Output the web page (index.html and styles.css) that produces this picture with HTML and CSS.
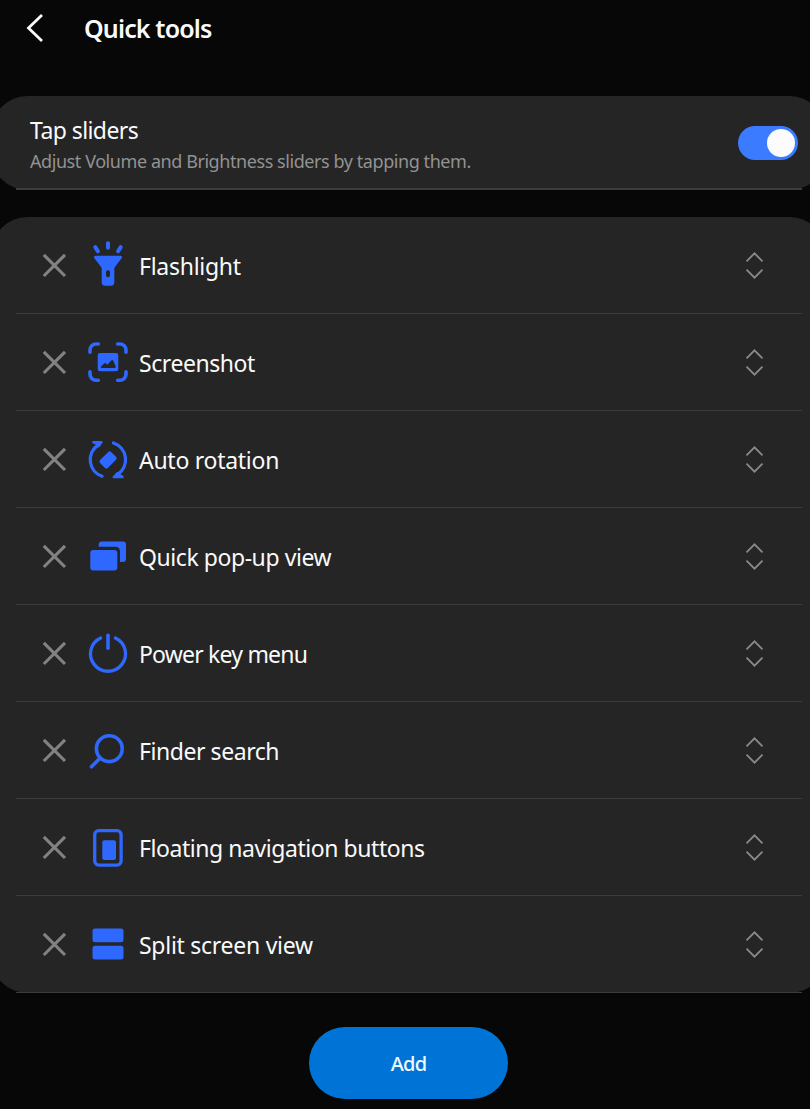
FILE: index.html
```
<!DOCTYPE html>
<html lang="en">
<head>
<meta charset="utf-8">
<title>Quick tools</title>
<link rel="stylesheet" href="styles.css">
</head>
<body>
<svg width="0" height="0" class="defs" aria-hidden="true">
  <symbol id="remove" viewBox="0 0 26 26"><path d="M2.8 2.8 24 24M24 2.8 2.8 24"/></symbol>
  <symbol id="sort" viewBox="0 0 20 30"><path d="M1.5 11.3 9.5 3.3 17.5 11.3M1.5 19.7 9.5 27.7 17.5 19.7"/></symbol>
</svg>
<header class="header">
  <svg class="back" viewBox="0 0 18 30"><path d="M16 2 2.5 15 16 28"/></svg>
  <h1 class="title">Quick tools</h1>
</header>
<section class="card setting">
  <div class="setting-body">
    <div class="setting-text">
      <div class="setting-name">Tap sliders</div>
      <div class="setting-desc">Adjust Volume and Brightness sliders by tapping them.</div>
    </div>
    <div class="switch"><div class="knob"></div></div>
  </div>
</section>
<ul class="card tools">
  <li class="tool">
    <svg class="remove"><use href="#remove"/></svg>
    <svg class="icon" viewBox="0 0 48 48"><g class="line thick"><path d="M24 2.2V6.7M11.3 6.1 13.9 10.3M36.7 6.1 34.1 10.3"/></g><path fill-rule="evenodd" d="M12 14.7H36.5C38 14.7 38.5 16 37.6 17.3L30.9 26Q30.3 26.9 30.3 28V41.3Q30.3 44.8 26.8 44.8H21.2Q17.7 44.8 17.7 41.3V28Q17.7 26.9 17.1 26L10.4 17.3C9.5 16 10.3 14.7 12 14.7ZM24 29.2A2 2 0 0 0 22 31.2V34.2A2 2 0 0 0 26 34.2V31.2A2 2 0 0 0 24 29.2Z"/></svg>
    <span class="name tight-s">Flashlight</span>
    <svg class="sort"><use href="#sort"/></svg>
  </li>
  <li class="tool">
    <svg class="remove"><use href="#remove"/></svg>
    <svg class="icon" viewBox="0 0 48 48"><g class="line"><path d="M14.3 6H12a6 6 0 0 0-6 6v2.3M33.7 6H36a6 6 0 0 1 6 6v2.3M14.3 42.2H12a6 6 0 0 1-6-6v-2.3M33.7 42.2H36a6 6 0 0 0 6-6v-2.3"/></g><path fill-rule="evenodd" d="M16 15H32Q34.3 15 34.3 17.3V31Q34.3 33.3 32 33.3H16Q13.7 33.3 13.7 31V17.3Q13.7 15 16 15ZM17.5 30H31Q32 29.6 31.7 28.4L29.3 22.8Q28.6 21.2 27.2 22.6L23.5 26.8 21.8 25.3Q20.9 24.7 20.1 25.6L17 28.7Q16.7 29.8 17.5 30Z"/></svg>
    <span class="name">Screenshot</span>
    <svg class="sort"><use href="#sort"/></svg>
  </li>
  <li class="tool">
    <svg class="remove"><use href="#remove"/></svg>
    <svg class="icon" viewBox="0 0 48 48"><g class="line thin"><path d="M14.2 10A17.6 17.6 0 0 0 18 41.3M29.5 8A17.6 17.6 0 0 1 33.8 39.3"/></g><path d="M9 6H17.5Q19.3 6.2 18.4 8L15.3 12.3H13L11.5 9.6 8.5 8.2Q7.2 6.6 9 6ZM39 43.3H30Q27.6 43 29 41.2L33 37H34.9L36.5 39.2 39.3 40.7Q40.4 42.6 39 43.3Z"/><rect x="16.2" y="19.4" width="15.6" height="11" rx="2" transform="rotate(-45 24 24.85)"/></svg>
    <span class="name tight-s">Auto rotation</span>
    <svg class="sort"><use href="#sort"/></svg>
  </li>
  <li class="tool">
    <svg class="remove"><use href="#remove"/></svg>
    <svg class="icon" viewBox="0 0 48 48"><rect x="6.3" y="18" width="27" height="20.6" rx="3"/><path d="M14.7 14.8V12.5Q14.7 9.4 17.8 9.4H39Q42 9.4 42 12.4V26.8Q42 30 38.8 30H36V19.8Q36 14.8 31 14.8Z"/></svg>
    <span class="name">Quick pop-up view</span>
    <svg class="sort"><use href="#sort"/></svg>
  </li>
  <li class="tool">
    <svg class="remove"><use href="#remove"/></svg>
    <svg class="icon" viewBox="0 0 48 48"><g class="line thin"><path d="M16.6 8.9A17.5 17.5 0 1 0 31.4 8.9"/></g><g class="line"><path d="M24 6.2V19.3"/></g></svg>
    <span class="name tight-l">Power key menu</span>
    <svg class="sort"><use href="#sort"/></svg>
  </li>
  <li class="tool">
    <svg class="remove"><use href="#remove"/></svg>
    <svg class="icon" viewBox="0 0 48 48"><g class="line"><circle cx="25.3" cy="22.7" r="12.9"/><path d="M16.2 32 7.5 40.8"/></g></svg>
    <span class="name">Finder search</span>
    <svg class="sort"><use href="#sort"/></svg>
  </li>
  <li class="tool">
    <svg class="remove"><use href="#remove"/></svg>
    <svg class="icon" viewBox="0 0 48 48"><g class="line thin"><rect x="10.7" y="7.7" width="26.4" height="34.4" rx="4"/></g><rect x="18.3" y="17.2" width="13.7" height="19.8" rx="2"/></svg>
    <span class="name">Floating navigation buttons</span>
    <svg class="sort"><use href="#sort"/></svg>
  </li>
  <li class="tool">
    <svg class="remove"><use href="#remove"/></svg>
    <svg class="icon" viewBox="0 0 48 48"><rect x="8.5" y="8.5" width="31" height="13.7" rx="2.5"/><rect x="8.5" y="25.8" width="31" height="13.7" rx="2.5"/></svg>
    <span class="name tight-s">Split screen view</span>
    <svg class="sort"><use href="#sort"/></svg>
  </li>
</ul>
<button class="add">Add</button>
</body>
</html>
```
FILE: styles.css
```
* { box-sizing: border-box; }
body {
  margin: 0;
  height: 1109px;
  overflow: hidden;
  background: #070707;
  color: #fafafa;
  font-family: "Noto Sans", sans-serif;
  display: flex;
  flex-direction: column;
}
svg { display: block; flex: none; }
.defs { position: absolute; }
.header {
  height: 96px;
  padding: 9px 0 0 27px;
  display: flex;
  align-items: flex-start;
}
.back {
  width: 18px;
  height: 30px;
  margin: 4px 0 0 -1px;
  fill: none;
  stroke: #fafafa;
  stroke-width: 2.8;
}
.title {
  margin: 0 0 0 40px;
  font-size: 25px;
  font-weight: 600;
  line-height: 38px;
  letter-spacing: -0.85px;
  white-space: nowrap;
}
.card {
  flex: none;
  margin: 0 -15px 0 -8px;
  background: #252525;
  border-radius: 35px;
}
.setting {
  height: 94px;
  padding: 0 23px 0 24px;
}
.setting-body {
  height: 94px;
  padding: 0 4px 0 14px;
  border-bottom: 2px solid #3c3c3c;
  display: flex;
  justify-content: space-between;
}
.setting-name {
  margin-top: 18px;
  font-size: 23px;
  line-height: 32px;
  letter-spacing: -0.57px;
  white-space: nowrap;
}
.setting-desc {
  margin-top: 3px;
  font-size: 18px;
  line-height: 25px;
  letter-spacing: -0.43px;
  color: #929292;
  white-space: nowrap;
}
.switch {
  width: 60px;
  height: 34px;
  margin-top: 30px;
  padding: 3px;
  border-radius: 17px;
  background: #3a7bff;
  display: flex;
  justify-content: flex-end;
}
.knob {
  width: 28px;
  height: 28px;
  border-radius: 50%;
  background: #fcfcff;
}
.tools {
  list-style: none;
  margin-top: 27px;
  padding: 0 23px 0 24px;
}
.tool {
  height: 97px;
  padding: 0 37px 0 25px;
  border-bottom: 1px solid #3c3c3c;
  display: flex;
  align-items: center;
}
.remove {
  width: 26px;
  height: 26px;
  fill: none;
  stroke: #828282;
  stroke-width: 3.1;
}
.icon {
  width: 48px;
  height: 48px;
  margin-left: 17px;
  fill: #2e68ff;
}
.line {
  fill: none;
  stroke: #2e68ff;
  stroke-width: 3.6;
  stroke-linecap: round;
}
.thin { stroke-width: 3.3; }
.thick { stroke-width: 4; }
.name {
  flex: 1;
  margin: 2px 0 0 7px;
  font-size: 23px;
  line-height: 32px;
  letter-spacing: -0.44px;
  white-space: nowrap;
}
.tight-s { letter-spacing: -0.27px; }
.tight-l { letter-spacing: -0.8px; }
.sort {
  width: 20px;
  height: 30px;
  fill: none;
  stroke: #8a8a8a;
  stroke-width: 1.8;
}
.add {
  flex: none;
  width: 199px;
  height: 72px;
  margin: 34px 0 0 309px;
  padding: 2px 0 0;
  border: 0;
  border-radius: 36px;
  background: #0074d6;
  color: #f2f8ff;
  font: 500 20px/70px "Noto Sans", sans-serif;
  letter-spacing: -0.8px;
}
```
